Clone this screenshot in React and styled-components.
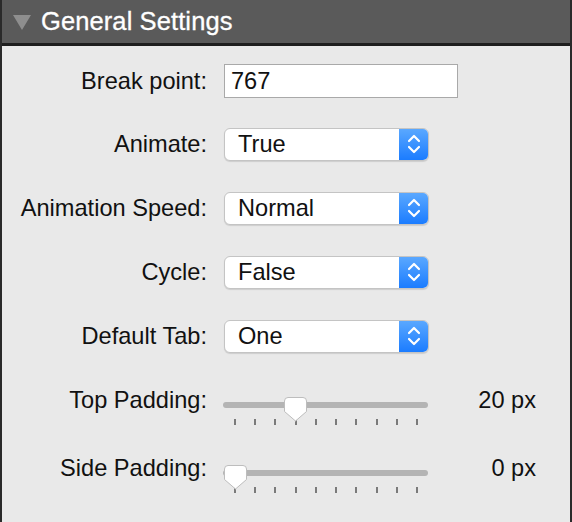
import React from "react";
import styled, { createGlobalStyle } from "styled-components";

const Global = createGlobalStyle`
  html, body { margin: 0; padding: 0; background: #e9e9e9; }
  body { font-family: "Liberation Sans", Arial, sans-serif; }
`;

const Panel = styled.div`
  width: 572px;
  height: 522px;
  box-sizing: border-box;
  border-left: 2px solid #2a2a2a;
  border-right: 2px solid #2a2a2a;
  background: #e9e9e9;
  overflow: hidden;
`;

const Header = styled.div`
  height: 43px;
  background: #5a5a5a;
  border-bottom: 3px solid #1e1e1e;
  display: flex;
  align-items: center;
  padding-left: 11px;
  gap: 10px;
  color: #fff;
  font-size: 25.5px;
  letter-spacing: 0.1px;
  -webkit-text-stroke: 0.3px #fff;
`;

const Triangle = styled.span`
  width: 0;
  height: 0;
  border-left: 9.5px solid transparent;
  border-right: 9.5px solid transparent;
  border-top: 15px solid #8e8e8e;
  margin-top: 2px;
`;

const Body = styled.div`
  padding-top: 4px;
`;

const Row = styled.div`
  display: flex;
  align-items: ${(p) => (p.$slider ? "flex-start" : "center")};
  gap: 17px;
  height: ${(p) => p.$h}px;
  box-sizing: border-box;
  padding-top: ${(p) => (p.$slider ? 18 : 0)}px;
`;

const Label = styled.div`
  width: 205px;
  text-align: right;
  font-size: 23.6px;
  line-height: 28px;
  color: #111;
  flex-shrink: 0;
`;

const TextInput = styled.div`
  width: 234px;
  height: 34px;
  box-sizing: border-box;
  border: 1px solid #a9a9a9;
  background: #fff;
  font-size: 23.6px;
  padding-left: 6px;
  display: flex;
  align-items: center;
  color: #111;
`;

const Select = styled.div`
  width: 205px;
  height: 33px;
  box-sizing: border-box;
  border: 1px solid #c4c4c4;
  border-radius: 6px;
  background: #fff;
  display: flex;
  overflow: hidden;
  box-shadow: 0 1px 1px rgba(0, 0, 0, 0.12);
`;

const SelectText = styled.div`
  flex: 1;
  font-size: 23.6px;
  padding-left: 13px;
  display: flex;
  align-items: center;
  color: #111;
`;

const Stepper = styled.div`
  width: 29px;
  background: linear-gradient(#5aa8ff, #1b7cff);
  display: flex;
  align-items: center;
  justify-content: center;
`;

const SliderBox = styled.div`
  position: relative;
  width: 205px;
  margin-top: 16px;
  margin-left: -1px;
`;

const Track = styled.div`
  height: 6px;
  border-radius: 3px;
  background: #b4b4b4;
`;

const Ticks = styled.div`
  display: flex;
  justify-content: space-between;
  padding: 0 10px 0 11px;
  margin-top: 11px;
`;

const Tick = styled.span`
  width: 2px;
  height: 6px;
  background: #7a7a7a;
`;

const Thumb = styled.svg`
  position: absolute;
  top: -6px;
`;

const Value = styled.div`
  width: 108px;
  text-align: right;
  font-size: 23.6px;
  line-height: 28px;
  color: #111;
  margin-left: -17px;
`;

const Chevrons = () => (
  <svg width="16" height="22" viewBox="0 0 16 22">
    <path d="M3 8 L8 3 L13 8" fill="none" stroke="#fff" strokeWidth="2.2" strokeLinecap="round" strokeLinejoin="round" />
    <path d="M3 14 L8 19 L13 14" fill="none" stroke="#fff" strokeWidth="2.2" strokeLinecap="round" strokeLinejoin="round" />
  </svg>
);

const SelectRow = ({ label, value }) => (
  <Row $h={64}>
    <Label>{label}</Label>
    <Select>
      <SelectText>{value}</SelectText>
      <Stepper>
        <Chevrons />
      </Stepper>
    </Select>
  </Row>
);

const SliderRow = ({ label, index, value }) => {
  const tickX = 12 + index * 20.2;
  return (
    <Row $h={68} $slider>
      <Label>{label}</Label>
      <SliderBox>
        <Track />
        <Ticks>
          {Array.from({ length: 10 }).map((_, i) => (
            <Tick key={i} />
          ))}
        </Ticks>
        <Thumb width="25" height="27" viewBox="0 0 25 27" style={{ left: tickX - 12.5 }}>
          <path
            d="M5 1.5 H20 Q23.5 1.5 23.5 5 V15.5 L12.5 25 L1.5 15.5 V5 Q1.5 1.5 5 1.5 Z"
            fill="#fff"
            stroke="#bdbdbd"
            strokeWidth="1"
          />
        </Thumb>
      </SliderBox>
      <Value>{value}</Value>
    </Row>
  );
};

export default function App() {
  return (
    <>
      <Global />
      <Panel>
        <Header>
          <Triangle />
          <span>General Settings</span>
        </Header>
        <Body>
          <Row $h={62}>
            <Label>Break point:</Label>
            <TextInput>767</TextInput>
          </Row>
          <SelectRow label="Animate:" value="True" />
          <SelectRow label="Animation Speed:" value="Normal" />
          <SelectRow label="Cycle:" value="False" />
          <SelectRow label="Default Tab:" value="One" />
          <SliderRow label="Top Padding:" index={3} value="20 px" />
          <SliderRow label="Side Padding:" index={0} value="0 px" />
        </Body>
      </Panel>
    </>
  );
}
